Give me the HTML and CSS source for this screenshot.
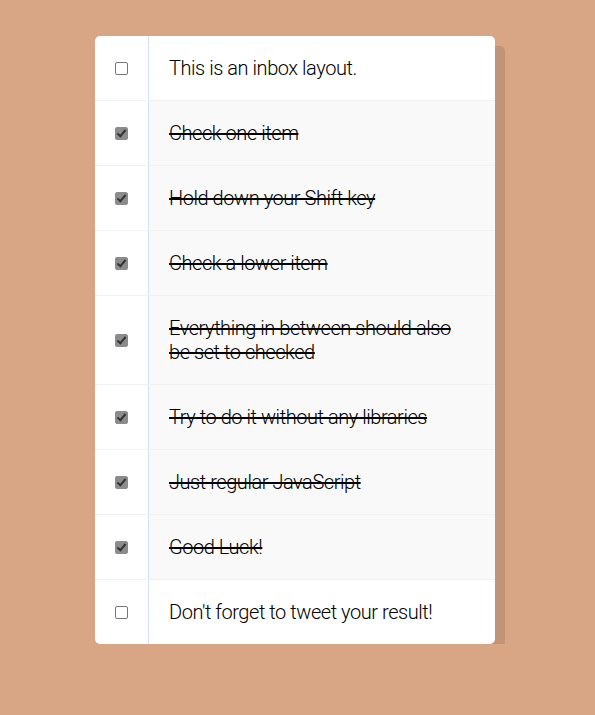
FILE: index.html
```html
<!DOCTYPE html>
<html>
<head>
<meta charset="utf-8">
<link rel="stylesheet" href="styles.css">
</head>
<body>
<div class="inbox">
  <div class="item"><input type="checkbox"><p>This is an inbox layout.</p></div>
  <div class="item"><input type="checkbox" checked><p>Check one item</p></div>
  <div class="item"><input type="checkbox" checked><p>Hold down your Shift key</p></div>
  <div class="item"><input type="checkbox" checked><p>Check a lower item</p></div>
  <div class="item"><input type="checkbox" checked><p>Everything in between should also be set to checked</p></div>
  <div class="item"><input type="checkbox" checked><p>Try to do it without any libraries</p></div>
  <div class="item"><input type="checkbox" checked><p>Just regular JavaScript</p></div>
  <div class="item"><input type="checkbox" checked><p>Good Luck!</p></div>
  <div class="item"><input type="checkbox"><p>Don't forget to tweet your result!</p></div>
</div>
</body>
</html>
```
FILE: styles.css
```css
html {
  background: #d8a585;
  font-family: "Liberation Sans", sans-serif;
}
body {
  margin: 0;
  padding: 36px 0 0;
}
.inbox {
  width: 400px;
  margin: 0 0 0 95px;
  background: #fff;
  border-radius: 5px;
  box-shadow: 10px 10px 0 rgba(0, 0, 0, 0.1);
  overflow: hidden;
}
.item {
  display: flex;
  align-items: center;
  border-bottom: 1px solid #f1f1f1;
}
.item:last-child {
  border-bottom: 0;
}
.item input {
  appearance: none;
  -webkit-appearance: none;
  width: 13px;
  height: 13px;
  margin: 20px;
  border: 1px solid #767676;
  border-radius: 2px;
  background: #fff;
  position: relative;
  flex: none;
}
.item input:checked {
  background: #8c8c8c;
  border-color: #8c8c8c;
}
.item input:checked::after {
  content: "";
  position: absolute;
  left: 3px;
  top: 0px;
  width: 3px;
  height: 7px;
  border: solid #333;
  border-width: 0 2px 2px 0;
  transform: rotate(40deg);
}
.item p {
  margin: 0;
  padding: 20px;
  flex: 1;
  font-family: "Roboto", "Liberation Sans", sans-serif;
  font-size: 20px;
  font-weight: 300;
  letter-spacing: -0.45px;
  line-height: 24px;
  color: #000;
  border-left: 1px solid #d1e2ff;
}
.item input:checked + p {
  background: #f9f9f9;
  text-decoration: line-through;
  text-decoration-thickness: 2px;
}
```
